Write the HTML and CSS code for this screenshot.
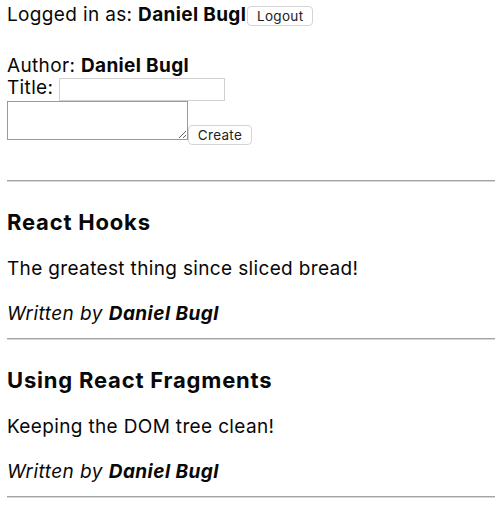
FILE: index.html
```html
<!DOCTYPE html>
<html>
<head>
<meta charset="utf-8">
<link rel="stylesheet" href="styles.css">
</head>
<body>
<div class="login">Logged in as: <b>Daniel Bugl</b><button class="btn btn-logout">Logout</button></div>
<form class="create">
  <div class="line">Author: <b>Daniel Bugl</b></div>
  <div class="line">Title: <input type="text" class="title-input"></div>
  <div class="line"><textarea class="content"></textarea><button type="button" class="btn btn-create">Create</button></div>
</form>
<hr class="rule rule-first">
<div class="post">
  <h3 class="post-title">React Hooks</h3>
  <p class="post-body">The greatest thing since sliced bread!</p>
  <p class="post-meta"><i>Written by <b>Daniel Bugl</b></i></p>
</div>
<hr class="rule">
<div class="post">
  <h3 class="post-title">Using React Fragments</h3>
  <p class="post-body">Keeping the DOM tree clean!</p>
  <p class="post-meta"><i>Written by <b>Daniel Bugl</b></i></p>
</div>
<hr class="rule">
</body>
</html>
```
FILE: styles.css
```css
html, body {
  background: #fff;
}
body {
  margin: 0;
  padding: 4px 5px 0 7px;
  font-family: Inter, "Noto Sans", sans-serif;
  font-size: 19px;
  letter-spacing: 0.35px;
  line-height: 22px;
  color: #080808;
}
b { font-weight: 700; }
i { letter-spacing: 0.45px; }
.login {
  line-height: 22px;
}
.btn {
  box-sizing: border-box;
  height: 20px;
  margin: 0;
  padding: 0 4px;
  font-family: Inter, "Noto Sans", sans-serif;
  font-size: 13.5px;
  letter-spacing: 0.3px;
  line-height: 18px;
  color: #222;
  background: #fff;
  border: 1px solid #d4d4d4;
  border-radius: 4px;
  vertical-align: baseline;
}
.btn-logout {
  width: 66px;
  margin-left: 1px;
}
.btn-create {
  width: 64px;
}
.create {
  margin: 29px 0 0;
}
.line {
  line-height: 22px;
}
.title-input {
  box-sizing: border-box;
  width: 166px;
  height: 23px;
  margin: 0;
  padding: 1px 2px;
  font-family: Inter, sans-serif;
  font-size: 13px;
  border: 1px solid #d0d0d0;
  border-radius: 0;
  background: #fff;
  vertical-align: baseline;
}
.content {
  box-sizing: border-box;
  width: 181px;
  height: 39px;
  margin: 0;
  padding: 2px;
  border: 1px solid #9a9a9a;
  background: #fff;
  vertical-align: baseline;
  font-family: Inter, sans-serif;
  font-size: 13px;
}
.rule {
  height: 0;
  margin: 0;
  border: 0;
  border-top: 1px solid #a4a4a4;
  border-bottom: 1px solid #d6d6d6;
}
.rule-first {
  margin-top: 35px;
}
.post {
  padding: 27px 0 13px;
}
.post-title {
  margin: 0 0 23px;
  font-size: 22px;
  letter-spacing: 0.8px;
  line-height: 26px;
  font-weight: 700;
}
.post-body {
  margin: 0 0 23px;
}
.post-meta {
  margin: 0;
}
```
